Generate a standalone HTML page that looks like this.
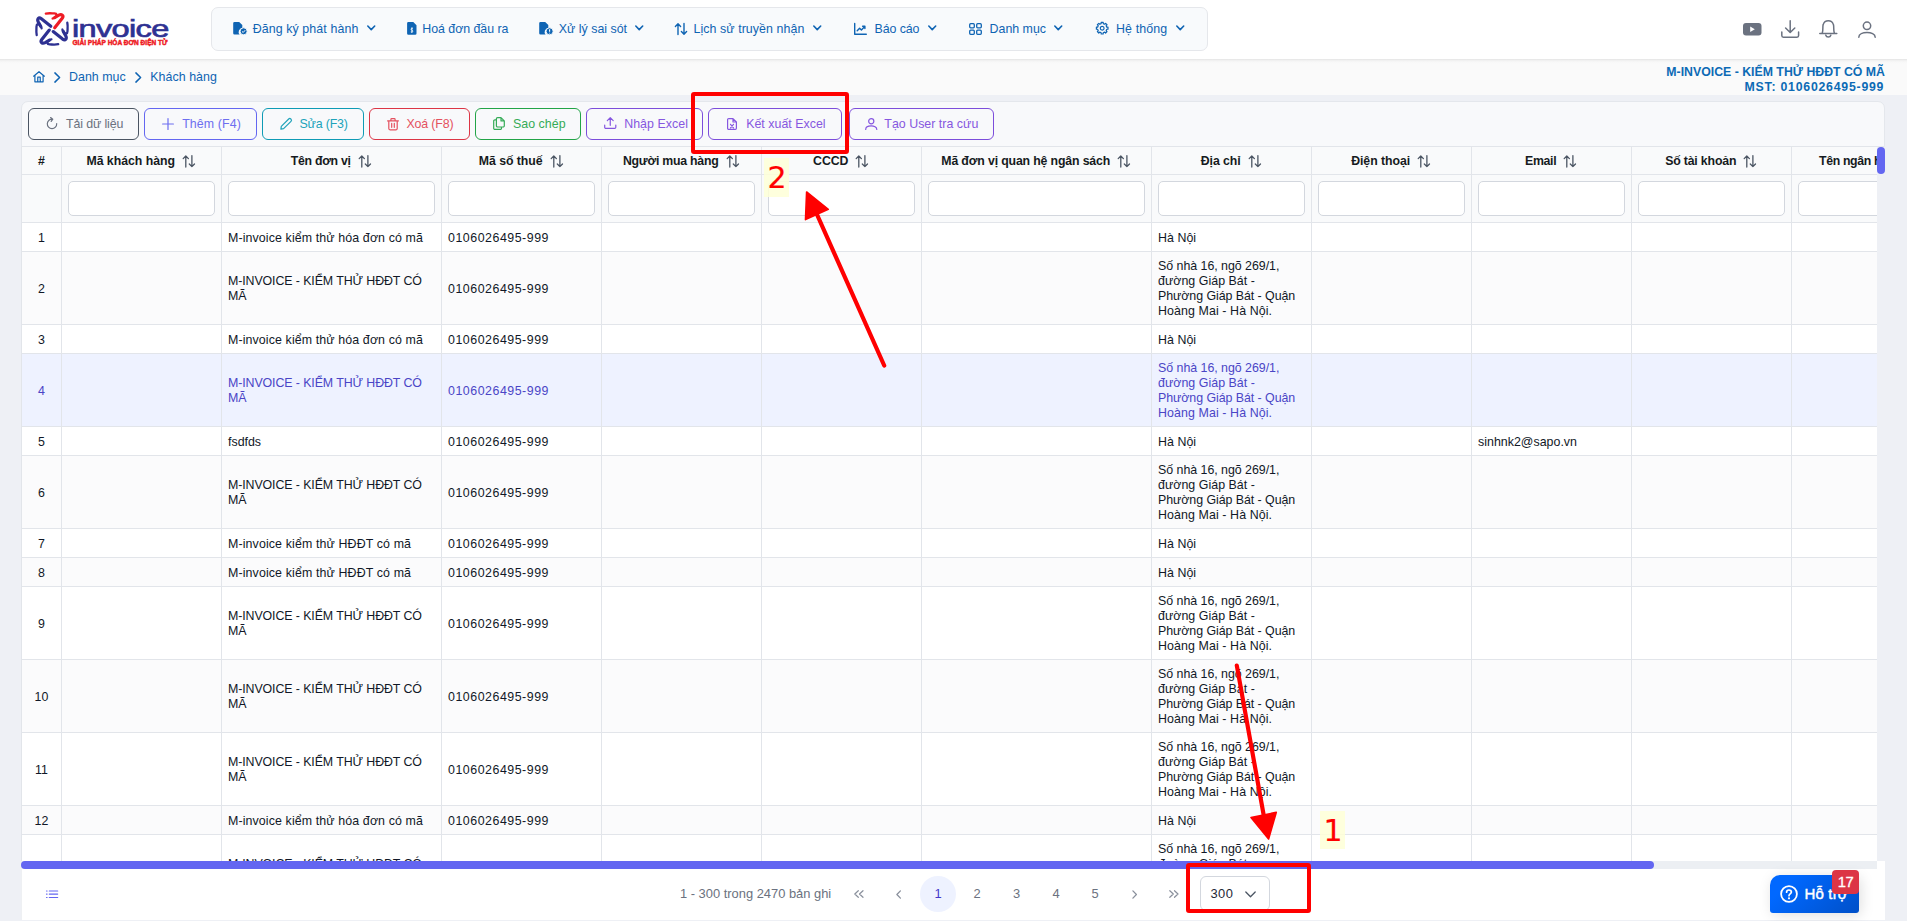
<!DOCTYPE html>
<html lang="vi">
<head>
<meta charset="utf-8">
<title>M-Invoice - Khách hàng</title>
<style>
*{box-sizing:border-box;margin:0;padding:0}
html,body{width:1907px;height:921px;overflow:hidden}
body{position:relative;background:#eef0f5;font-family:"Liberation Sans",sans-serif;font-size:12.4px;color:#111827}
.abs{position:absolute}
svg{position:absolute;overflow:visible}
#hdr{left:0;top:0;width:1907px;height:59px;background:#fff}
#nav{left:211px;top:7px;width:997px;height:44px;background:#f8fafc;border:1px solid #e5e7eb;border-radius:7px}
.nt{position:absolute;top:21px;line-height:16px;color:#0f64b3;white-space:nowrap}
#bc{left:0;top:59px;width:1907px;height:36px;background:linear-gradient(#e4e4e4 0,#f1f1f1 1.5px,#f8f8f8 3px,#fafafa 5px),#fafafa;background-repeat:no-repeat;background-size:100% 5px,100% 100%}
.bct{position:absolute;top:69px;line-height:16px;color:#0f64b3;white-space:nowrap}
.comp{position:absolute;right:22px;color:#0c6ab5;font-weight:bold;font-size:12.3px;line-height:15px;white-space:nowrap}
#tb{left:21px;top:101px;width:1864px;height:46px;background:#f8f9fb;border:1px solid #e4e7ec;border-radius:7px 7px 0 0}
.btn{position:absolute;top:108px;height:32px;border:1px solid;border-radius:6px;white-space:nowrap}
.btn span{position:absolute;top:7px;line-height:16px}
#grid{left:21px;top:146px;width:1856px;height:715px;overflow:hidden;background:#fff;border-left:1px solid #e2e5ea;border-top:1px solid #e2e5ea}
.row{position:absolute;left:0;width:1900px;border-bottom:1px solid #e2e5ea}
.c{position:absolute;top:0;bottom:0;border-right:1px solid #e2e5ea;padding:2px 6px 0 6px;display:flex;align-items:center;line-height:15px}
.c.n{justify-content:center;padding:2px 0 0 0}
.h{background:#f9fafb;font-weight:bold;color:#161a21}
.h .c{justify-content:center;padding:2px 2px 0 0;white-space:nowrap;font-size:12.3px}
.h .c svg{position:static;margin-left:8px;flex:none}
.f{background:#f9fafb}

.f i{position:absolute;left:6px;right:6px;top:6px;height:35px;background:#fff;border:1px solid #d3d7de;border-radius:5px}
.ev{background:#fbfbfc}
.sel{background:#eef2ff;color:#4a45c6}
#hs{left:21px;top:861px;width:1856px;height:8px;background:#eceff3}
#hs b{position:absolute;left:1856px;top:0;width:8px;height:8px;background:#fff}
#hs i{position:absolute;left:0;top:0;width:1633px;height:8px;border-radius:4px;background:#6366f1}
#vs{left:1877px;top:147px;width:8px;height:27px;border-radius:4px;background:#6366f1}
#ft{left:21px;top:869px;width:1864px;height:50.5px;background:#fff;border-left:1px solid #eef0f3}
.pg{position:absolute;top:885px;line-height:18px;color:#6b7280;white-space:nowrap;font-size:12.9px}
.pn{position:absolute;top:876px;width:36px;height:36px;border-radius:18px;text-align:center;line-height:36px;color:#6b7280;font-size:12.9px}
.pn.on{background:#eef2ff;color:#4338ca}
#dd{left:1200px;top:876px;width:70px;height:35px;border:1px solid #d3d7de;border-radius:6px;background:#fff}
#dd span{position:absolute;left:9.5px;top:8px;line-height:18px;color:#1f2937;font-size:12.9px;letter-spacing:.4px}
.lab{position:absolute;background:rgba(254,255,215,.85);color:#f00;-webkit-text-stroke:0.2px #f00;padding:1px 0 0 1px;font-family:"DejaVu Sans",sans-serif;font-size:30px;line-height:38px;text-align:center}
.rr{position:absolute;border:4px solid #f00;border-radius:3px}
#sup{left:1770px;top:875px;width:89px;height:38px;border-radius:10px 4px 3px 3px;background:linear-gradient(135deg,#0068ff 20%,#0050c8);color:#fff;font-size:15px;-webkit-text-stroke:0.45px #fff;box-shadow:2px 2px 14px rgba(0,0,0,.13)}
#sup span{position:absolute;left:34.5px;top:8.500px;line-height:20px;white-space:nowrap}
#bdg{left:1832px;top:870px;width:27px;height:24px;border-radius:4px;background:#dc3545;color:#fff;font-size:14.8px;line-height:24.5px;text-align:center;letter-spacing:-.4px;-webkit-text-stroke:0.3px #fff}
</style>
</head>
<body>
<div id="hdr" class="abs"></div>
<div id="nav" class="abs"></div>
<div id="bc" class="abs"></div>
<svg id="logo" style="left:33px;top:10px" width="140" height="40" viewBox="0 0 140 40"><g transform="translate(19 18.9) rotate(0)" fill="none" stroke="#ee1c25" stroke-linecap="round" stroke-linejoin="round"><path d="M2.7 -1.2 L10.2 -10.6 C12.2 -13.4 9.600 -15.200 6.800 -13.700 L2.600 -11.300" stroke-width="3.2"/><path d="M2.600 -11.300 C1.500 -10.500 0.900 -10.300 0.600 -10.400 M3.600 -12 C5.200 -13.200 5.200 -15.500 2.400 -15.500 C0 -15.500 -3 -16 -6.200 -15.300" stroke-width="2.3"/></g><g transform="translate(19 18.9) rotate(-90)" fill="none" stroke="#2e3192" stroke-linecap="round" stroke-linejoin="round"><path d="M2.7 -1.2 L10.2 -10.6 C12.2 -13.4 9.600 -15.200 6.800 -13.700 L2.600 -11.300" stroke-width="3.2"/><path d="M2.600 -11.300 C1.500 -10.500 0.900 -10.300 0.600 -10.400 M3.600 -12 C5.200 -13.200 5.200 -15.500 2.400 -15.500 C0 -15.500 -3 -16 -6.200 -15.300" stroke-width="2.3"/></g><g transform="translate(19 18.9) rotate(-180)" fill="none" stroke="#2e3192" stroke-linecap="round" stroke-linejoin="round"><path d="M2.7 -1.2 L10.2 -10.6 C12.2 -13.4 9.600 -15.200 6.800 -13.700 L2.600 -11.300" stroke-width="3.2"/><path d="M2.600 -11.300 C1.500 -10.500 0.900 -10.300 0.600 -10.400 M3.600 -12 C5.200 -13.200 5.200 -15.500 2.400 -15.500 C0 -15.500 -3 -16 -6.200 -15.300" stroke-width="2.3"/></g><g transform="translate(19 18.9) rotate(-270)" fill="none" stroke="#2e3192" stroke-linecap="round" stroke-linejoin="round"><path d="M2.7 -1.2 L10.2 -10.6 C12.2 -13.4 9.600 -15.200 6.800 -13.700 L2.600 -11.300" stroke-width="3.2"/><path d="M2.600 -11.300 C1.500 -10.500 0.900 -10.300 0.600 -10.400 M3.600 -12 C5.200 -13.200 5.200 -15.500 2.400 -15.500 C0 -15.500 -3 -16 -6.200 -15.300" stroke-width="2.3"/></g><text transform="translate(38.9 27.1) scale(1.335 1)" font-family="Liberation Sans, sans-serif" font-size="24.4" letter-spacing="-0.5" fill="#2e3192" stroke="#2e3192" stroke-width="0.7">invoice</text><text x="39.5" y="35.3" font-family="Liberation Sans, sans-serif" font-weight="bold" font-size="7.6" fill="#ee1c25" stroke="#ee1c25" stroke-width="0.5" textLength="95" lengthAdjust="spacingAndGlyphs">GIẢI PHÁP HÓA ĐƠN ĐIỆN TỬ</text></svg>
<svg style="left:233px;top:22px" width="15" height="13" viewBox="0 0 15 13"><path d="M1.5 0 H6.2 L9.3 3.1 V6 A4 4 0 0 0 6.6 12.6 H1.5 A1.3 1.3 0 0 1 0.2 11.3 V1.3 A1.3 1.3 0 0 1 1.5 0 Z" fill="#0f64b3"/><circle cx="10.6" cy="9.3" r="3.5" fill="#0f64b3" stroke="#f8fafc" stroke-width="0.9"/><path d="M9 9.4 L10.2 10.5 L12.2 8.2" fill="none" stroke="#f8fafc" stroke-width="1"/></svg><span class="nt" style="left:252.7px;letter-spacing:0.098px">Đăng ký phát hành</span><svg style="left:366.8px;top:25px" width="8.5" height="6.6" viewBox="0 0 8.5 6.6"><path d="M0.8 1 L4.25 4.6 L7.7 1" fill="none" stroke="#0f64b3" stroke-width="1.6" stroke-linecap="round" stroke-linejoin="round"/></svg>
<svg style="left:406.7px;top:22px" width="15" height="13" viewBox="0 0 15 13"><path d="M1.4 0 H6.3 L9.5 3.2 V11.4 A1.3 1.3 0 0 1 8.2 12.7 H1.4 A1.3 1.3 0 0 1 0.1 11.4 V1.3 A1.3 1.3 0 0 1 1.4 0 Z" fill="#0f64b3"/><path d="M5.9 6.3 C3.6 5.8 3.6 8 4.9 8.2 C6.3 8.5 6.2 10.5 3.8 9.9 M4.9 5.4 V10.9" fill="none" stroke="#f8fafc" stroke-width="0.9"/></svg><span class="nt" style="left:422.3px;letter-spacing:-0.04px">Hoá đơn đầu ra</span>
<svg style="left:539.2px;top:22px" width="15" height="13" viewBox="0 0 15 13"><path d="M1.5 0 H6.2 L9.3 3.1 V6 A4 4 0 0 0 6.6 12.6 H1.5 A1.3 1.3 0 0 1 0.2 11.3 V1.3 A1.3 1.3 0 0 1 1.5 0 Z" fill="#0f64b3"/><circle cx="10.6" cy="9.3" r="3.5" fill="#0f64b3" stroke="#f8fafc" stroke-width="0.9"/><path d="M10.6 7.3 V9.7 M10.6 10.7 V11.4" fill="none" stroke="#f8fafc" stroke-width="1.1"/></svg><span class="nt" style="left:558.8px;letter-spacing:-0.0px">Xử lý sai sót</span><svg style="left:635px;top:25px" width="8.5" height="6.6" viewBox="0 0 8.5 6.6"><path d="M0.8 1 L4.25 4.6 L7.7 1" fill="none" stroke="#0f64b3" stroke-width="1.6" stroke-linecap="round" stroke-linejoin="round"/></svg>
<svg style="left:675px;top:22.5px" width="12" height="12" viewBox="0 0 12 12"><path d="M3 11.5 V0.9 M0.4 3.4 L3 0.8 L5.6 3.4 M9 0.5 V11.1 M6.4 8.6 L9 11.2 L11.6 8.6" fill="none" stroke="#0f64b3" stroke-width="1.4" stroke-linecap="round" stroke-linejoin="round"/></svg><span class="nt" style="left:693.5px;letter-spacing:0.07px">Lịch sử truyền nhận</span><svg style="left:812.6px;top:25px" width="8.5" height="6.6" viewBox="0 0 8.5 6.6"><path d="M0.8 1 L4.25 4.6 L7.7 1" fill="none" stroke="#0f64b3" stroke-width="1.6" stroke-linecap="round" stroke-linejoin="round"/></svg>
<svg style="left:854px;top:22.5px" width="13" height="12" viewBox="0 0 13 12"><path d="M0.7 0.5 V11.3 H12.3 M3.2 7.8 L5.6 5.2 L7.4 6.9 L10.8 3.4 M8.6 3.3 H10.9 V5.6" fill="none" stroke="#0f64b3" stroke-width="1.4" stroke-linecap="round" stroke-linejoin="round"/></svg><span class="nt" style="left:874.5px;letter-spacing:-0.081px">Báo cáo</span><svg style="left:928px;top:25px" width="8.5" height="6.6" viewBox="0 0 8.5 6.6"><path d="M0.8 1 L4.25 4.6 L7.7 1" fill="none" stroke="#0f64b3" stroke-width="1.6" stroke-linecap="round" stroke-linejoin="round"/></svg>
<svg style="left:969.2px;top:22.5px" width="13" height="12" viewBox="0 0 13 12"><g fill="none" stroke="#0f64b3" stroke-width="1.3"><rect x="0.7" y="0.7" width="4.6" height="4.1" rx="1"/><rect x="7.7" y="0.7" width="4.6" height="4.1" rx="1"/><rect x="0.7" y="7.2" width="4.6" height="4.1" rx="1"/><rect x="7.7" y="7.2" width="4.6" height="4.1" rx="1"/></g></svg><span class="nt" style="left:989.6px;letter-spacing:-0.011px">Danh mục</span><svg style="left:1054.3px;top:25px" width="8.5" height="6.6" viewBox="0 0 8.5 6.6"><path d="M0.8 1 L4.25 4.6 L7.7 1" fill="none" stroke="#0f64b3" stroke-width="1.6" stroke-linecap="round" stroke-linejoin="round"/></svg>
<svg style="left:1096px;top:22.3px" width="12.4" height="12.4" viewBox="0 0 12.4 12.4"><path d="M5.20 0.39 L7.20 0.39 L7.23 1.61 L8.72 2.23 L9.61 1.38 L11.02 2.79 L10.17 3.68 L10.79 5.17 L12.01 5.20 L12.01 7.20 L10.79 7.23 L10.17 8.72 L11.02 9.61 L9.61 11.02 L8.72 10.17 L7.23 10.79 L7.20 12.01 L5.20 12.01 L5.17 10.79 L3.68 10.17 L2.79 11.02 L1.38 9.61 L2.23 8.72 L1.61 7.23 L0.39 7.20 L0.39 5.20 L1.61 5.17 L2.23 3.68 L1.38 2.79 L2.79 1.38 L3.68 2.23 L5.17 1.61 Z" fill="none" stroke="#0f64b3" stroke-width="1.2" stroke-linejoin="round"/><circle cx="6.2" cy="6.2" r="1.9" fill="none" stroke="#0f64b3" stroke-width="1.2"/></svg><span class="nt" style="left:1116px;letter-spacing:0.125px">Hệ thống</span><svg style="left:1176px;top:25px" width="8.5" height="6.6" viewBox="0 0 8.5 6.6"><path d="M0.8 1 L4.25 4.6 L7.7 1" fill="none" stroke="#0f64b3" stroke-width="1.6" stroke-linecap="round" stroke-linejoin="round"/></svg>
<svg style="left:1742.5px;top:23px" width="18.5" height="12.5" viewBox="0 0 18.5 12.5"><rect x="0" y="0" width="18.5" height="12.5" rx="3" fill="#6b7280"/><path d="M7.2 3.6 L11.8 6.25 L7.2 8.9 Z" fill="#fff"/></svg><svg style="left:1781px;top:20px" width="18.4" height="18" viewBox="0 0 18.4 18"><path d="M9.2 0.7 V12.3 M4.6 8 L9.2 12.5 L13.8 8 M0.8 12 V15.6 A1.6 1.6 0 0 0 2.4 17.2 H16 A1.6 1.6 0 0 0 17.6 15.6 V12" fill="none" stroke="#6b7280" stroke-width="1.5" stroke-linecap="round" stroke-linejoin="round"/></svg><svg style="left:1819px;top:20px" width="18.6" height="18" viewBox="0 0 18.6 18"><path d="M0.8 13.6 H17.8 M3.2 13.4 C4.4 10.5 3.4 7 4.2 4.6 C5 2 7 0.8 9.3 0.8 C11.600 0.8 13.6 2 14.4 4.6 C15.2 7 14.2 10.5 15.4 13.4 M6.8 15.2 C7.4 17.6 11.2 17.6 11.8 15.2" fill="none" stroke="#6b7280" stroke-width="1.5" stroke-linecap="round" stroke-linejoin="round"/></svg><svg style="left:1858px;top:20.5px" width="18" height="17" viewBox="0 0 18 17"><circle cx="9" cy="4.8" r="3.7" fill="none" stroke="#6b7280" stroke-width="1.5"/><path d="M0.8 16.2 C0.8 9.8 17.2 9.8 17.2 16.2" fill="none" stroke="#6b7280" stroke-width="1.5" stroke-linecap="round"/></svg>
<svg style="left:33px;top:71px" width="12" height="11.5" viewBox="0 0 12 11.5"><path d="M0.6 5.2 L6 0.7 L11.4 5.2 M1.9 4.4 V10.8 H10.1 V4.4 M4.75 10.8 V6.2 H7.25 V10.8" fill="none" stroke="#0f64b3" stroke-width="1.2" stroke-linecap="round" stroke-linejoin="round"/></svg><svg style="left:53.8px;top:71.5px" width="6.5" height="11" viewBox="0 0 6.5 11"><path d="M0.9 0.9 L5.6 5.5 L0.9 10.1" fill="none" stroke="#0f64b3" stroke-width="1.5" stroke-linecap="round" stroke-linejoin="round"/></svg><span class="bct" style="left:69px;letter-spacing:0.039px">Danh mục</span><svg style="left:135px;top:71.5px" width="6.5" height="11" viewBox="0 0 6.5 11"><path d="M0.9 0.9 L5.6 5.5 L0.9 10.1" fill="none" stroke="#0f64b3" stroke-width="1.5" stroke-linecap="round" stroke-linejoin="round"/></svg><span class="bct" style="left:150.3px;letter-spacing:0.046px">Khách hàng</span>
<div class="comp" style="top:65px;letter-spacing:0.004px;right:22.004px">M-INVOICE - KIỂM THỬ HĐĐT CÓ MÃ</div><div class="comp" style="top:80px;letter-spacing:0.768px;right:22.768px">MST: 0106026495-999</div>
<div id="tb" class="abs"></div>
<div class="btn" style="left:28px;width:111px;border-color:#4b5563;color:#6b7280"><svg style="left:17px;top:8.3px" width="12" height="12" viewBox="0 0 12 12"><path d="M6.6 2.2 A4.7 4.7 0 1 0 10.7 6.6 M4.6 0.6 L6.8 2.2 L5.2 4.4" fill="none" stroke="#6b7280" stroke-width="1.2" stroke-linecap="round" stroke-linejoin="round"/></svg><span style="left:37px;letter-spacing:-0.125px">Tải dữ liệu</span></div>
<div class="btn" style="left:144px;width:113px;border-color:#6366f1;color:#6d6ef0"><svg style="left:17px;top:8.8px" width="12" height="12" viewBox="0 0 12 12"><path d="M6 0.6 V11.4 M0.6 6 H11.4" fill="none" stroke="#6d6ef0" stroke-width="1.2" stroke-linecap="round" stroke-linejoin="round"/></svg><span style="left:37.2px;letter-spacing:0.108px">Thêm (F4)</span></div>
<div class="btn" style="left:262px;width:102px;border-color:#0e9bb5;color:#20a3ba"><svg style="left:16.5px;top:8.8px" width="12" height="12" viewBox="0 0 12 12"><path d="M0.9 11.1 L1.3 8.400 L8.700 1 A1.5 1.5 0 0 1 10.800 1 L11 1.200 A1.5 1.500 0 0 1 11 3.300 L3.600 10.700 Z" fill="none" stroke="#20a3ba" stroke-width="1.2" stroke-linecap="round" stroke-linejoin="round"/></svg><span style="left:36.5px;letter-spacing:-0.164px">Sửa (F3)</span></div>
<div class="btn" style="left:369px;width:101px;border-color:#dc3545;color:#e4515f"><svg style="left:16.5px;top:8.8px" width="12" height="12.5" viewBox="0 0 12 12.5"><path d="M0.6 2.9 H11.4 M3.9 2.7 V1.4 A0.8 0.8 0 0 1 4.7 0.6 H7.3 A0.8 0.8 0 0 1 8.1 1.4 V2.7 M1.8 3 V10.6 A1.2 1.2 0 0 0 3 11.8 H9 A1.2 1.2 0 0 0 10.2 10.600 V3 M4.7 5.400 V9.3 M7.3 5.400 V9.3" fill="none" stroke="#e4515f" stroke-width="1.2" stroke-linecap="round" stroke-linejoin="round"/></svg><span style="left:36.4px;letter-spacing:-0.138px">Xoá (F8)</span></div>
<div class="btn" style="left:475px;width:106px;border-color:#22a447;color:#35ab57"><svg style="left:17px;top:8.3px" width="12" height="13" viewBox="0 0 12 13"><path d="M4.600 0.600 H8 L11.300 3.900 V8.800 A1.200 1.200 0 0 1 10.100 10 H4.600 A1.200 1.200 0 0 1 3.400 8.800 V1.800 A1.200 1.200 0 0 1 4.600 0.600 Z M8 0.700 V3.900 H11.200 M3.300 2.800 H1.900 A1.200 1.200 0 0 0 0.700 4 V11.200 A1.200 1.200 0 0 0 1.900 12.400 H7.300 A1.200 1.200 0 0 0 8.500 11.200 V10.100" fill="none" stroke="#35ab57" stroke-width="1.2" stroke-linecap="round" stroke-linejoin="round"/></svg><span style="left:37px;letter-spacing:0.03px">Sao chép</span></div>
<div class="btn" style="left:586px;width:117px;border-color:#7c4ddb;color:#8657e0"><svg style="left:16.5px;top:8.3px" width="12.5" height="12" viewBox="0 0 12.5 12"><path d="M6.25 8.300 V0.700 M3.300 3.600 L6.250 0.650 L9.200 3.600 M0.700 8 V10.300 A1.100 1.100 0 0 0 1.800 11.400 H10.700 A1.100 1.100 0 0 0 11.800 10.300 V8" fill="none" stroke="#8657e0" stroke-width="1.2" stroke-linecap="round" stroke-linejoin="round"/></svg><span style="left:37.2px;letter-spacing:0.042px">Nhập Excel</span></div>
<div class="btn" style="left:708px;width:134px;border-color:#7c4ddb;color:#8657e0"><svg style="left:18px;top:8.8px" width="10" height="12" viewBox="0 0 10 12"><path d="M1.700 0.600 H6 L9.400 4 V10.300 A1.100 1.100 0 0 1 8.300 11.400 H1.700 A1.100 1.100 0 0 1 0.600 10.300 V1.700 A1.100 1.100 0 0 1 1.700 0.600 Z M6 0.700 V4 H9.300 M3.500 6.300 L6.500 9.800 M6.500 6.300 L3.500 9.800" fill="none" stroke="#8657e0" stroke-width="1.2" stroke-linecap="round" stroke-linejoin="round"/></svg><span style="left:37.2px;letter-spacing:0.014px">Kết xuất Excel</span></div>
<div class="btn" style="left:848.5px;width:145px;border-color:#7c4ddb;color:#8657e0"><svg style="left:15px;top:8.8px" width="12.5" height="12" viewBox="0 0 12.5 12"><circle cx="6.25" cy="3.300" r="2.600" fill="none" stroke="#8657e0" stroke-width="1.2" stroke-linecap="round" stroke-linejoin="round"/><path d="M0.700 11.400 C0.700 6.800 11.800 6.800 11.800 11.400" fill="none" stroke="#8657e0" stroke-width="1.2" stroke-linecap="round" stroke-linejoin="round"/></svg><span style="left:34.8px;letter-spacing:0.02px">Tạo User tra cứu</span></div>
<div id="grid" class="abs">
<div class="row h" style="top:0;height:28px"><div class="c" style="left:0;width:40px;padding-right:0">#</div><div class="c" style="left:40px;width:160px"><span style="letter-spacing:-0.019px">Mã khách hàng</span><svg width="11.6" height="12.5" viewBox="0.2 0 11.6 12.5"><path d="M3 12 V1 M0.400 3.600 L3 1 L5.600 3.600 M9.100 0.600 V11.600 M6.500 9 L9.100 11.600 L11.700 9" fill="none" stroke="#4b5563" stroke-width="1.300" stroke-linecap="round" stroke-linejoin="round"/></svg></div><div class="c" style="left:200px;width:220px"><span style="letter-spacing:-0.272px">Tên đơn vị</span><svg width="11.6" height="12.5" viewBox="0.2 0 11.6 12.5"><path d="M3 12 V1 M0.400 3.600 L3 1 L5.600 3.600 M9.100 0.600 V11.600 M6.500 9 L9.100 11.600 L11.700 9" fill="none" stroke="#4b5563" stroke-width="1.300" stroke-linecap="round" stroke-linejoin="round"/></svg></div><div class="c" style="left:420px;width:160px"><span style="letter-spacing:-0.053px">Mã số thuế</span><svg width="11.6" height="12.5" viewBox="0.2 0 11.6 12.5"><path d="M3 12 V1 M0.400 3.600 L3 1 L5.600 3.600 M9.100 0.600 V11.600 M6.500 9 L9.100 11.600 L11.700 9" fill="none" stroke="#4b5563" stroke-width="1.300" stroke-linecap="round" stroke-linejoin="round"/></svg></div><div class="c" style="left:580px;width:160px"><span style="letter-spacing:-0.24px">Người mua hàng</span><svg width="11.6" height="12.5" viewBox="0.2 0 11.6 12.5"><path d="M3 12 V1 M0.400 3.600 L3 1 L5.600 3.600 M9.100 0.600 V11.600 M6.500 9 L9.100 11.600 L11.700 9" fill="none" stroke="#4b5563" stroke-width="1.300" stroke-linecap="round" stroke-linejoin="round"/></svg></div><div class="c" style="left:740px;width:160px"><span style="letter-spacing:-0.083px">CCCD</span><svg width="11.6" height="12.5" viewBox="0.2 0 11.6 12.5"><path d="M3 12 V1 M0.400 3.600 L3 1 L5.600 3.600 M9.100 0.600 V11.600 M6.500 9 L9.100 11.600 L11.700 9" fill="none" stroke="#4b5563" stroke-width="1.300" stroke-linecap="round" stroke-linejoin="round"/></svg></div><div class="c" style="left:900px;width:230px"><span style="letter-spacing:-0.146px">Mã đơn vị quan hệ ngân sách</span><svg width="11.6" height="12.5" viewBox="0.2 0 11.6 12.5"><path d="M3 12 V1 M0.400 3.600 L3 1 L5.600 3.600 M9.100 0.600 V11.600 M6.500 9 L9.100 11.600 L11.700 9" fill="none" stroke="#4b5563" stroke-width="1.300" stroke-linecap="round" stroke-linejoin="round"/></svg></div><div class="c" style="left:1130px;width:160px"><span style="letter-spacing:-0.075px">Địa chỉ</span><svg width="11.6" height="12.5" viewBox="0.2 0 11.6 12.5"><path d="M3 12 V1 M0.400 3.600 L3 1 L5.600 3.600 M9.100 0.600 V11.600 M6.500 9 L9.100 11.600 L11.700 9" fill="none" stroke="#4b5563" stroke-width="1.300" stroke-linecap="round" stroke-linejoin="round"/></svg></div><div class="c" style="left:1290px;width:160px"><span style="letter-spacing:-0.034px">Điện thoại</span><svg width="11.6" height="12.5" viewBox="0.2 0 11.6 12.5"><path d="M3 12 V1 M0.400 3.600 L3 1 L5.600 3.600 M9.100 0.600 V11.600 M6.500 9 L9.100 11.600 L11.700 9" fill="none" stroke="#4b5563" stroke-width="1.300" stroke-linecap="round" stroke-linejoin="round"/></svg></div><div class="c" style="left:1450px;width:160px"><span style="letter-spacing:-0.323px">Email</span><svg width="11.6" height="12.5" viewBox="0.2 0 11.6 12.5"><path d="M3 12 V1 M0.400 3.600 L3 1 L5.600 3.600 M9.100 0.600 V11.600 M6.500 9 L9.100 11.600 L11.700 9" fill="none" stroke="#4b5563" stroke-width="1.300" stroke-linecap="round" stroke-linejoin="round"/></svg></div><div class="c" style="left:1610px;width:160px"><span style="letter-spacing:-0.167px">Số tài khoản</span><svg width="11.6" height="12.5" viewBox="0.2 0 11.6 12.5"><path d="M3 12 V1 M0.400 3.600 L3 1 L5.600 3.600 M9.100 0.600 V11.600 M6.500 9 L9.100 11.600 L11.700 9" fill="none" stroke="#4b5563" stroke-width="1.300" stroke-linecap="round" stroke-linejoin="round"/></svg></div><div class="c" style="left:1770px;width:160px;justify-content:flex-start;padding-left:27px"><span style="letter-spacing:-0.343px">Tên ngân hàng</span></div></div>
<div class="row f" style="top:28px;height:48px"><div class="c" style="left:0px;width:40px"></div><div class="c" style="left:40px;width:160px"><i></i></div><div class="c" style="left:200px;width:220px"><i></i></div><div class="c" style="left:420px;width:160px"><i></i></div><div class="c" style="left:580px;width:160px"><i></i></div><div class="c" style="left:740px;width:160px"><i></i></div><div class="c" style="left:900px;width:230px"><i></i></div><div class="c" style="left:1130px;width:160px"><i></i></div><div class="c" style="left:1290px;width:160px"><i></i></div><div class="c" style="left:1450px;width:160px"><i></i></div><div class="c" style="left:1610px;width:160px"><i></i></div><div class="c" style="left:1770px;width:160px"><i></i></div></div>
<div class="row" style="top:76px;height:29px"><div class="c n" style="left:0px;width:40px">1</div><div class="c" style="left:40px;width:160px"></div><div class="c" style="left:200px;width:220px"><span><span style="letter-spacing:0.114px">M-invoice kiểm thử hóa đơn có mã</span></span></div><div class="c" style="left:420px;width:160px"><span style="letter-spacing:0.52px">0106026495-999</span></div><div class="c" style="left:580px;width:160px"></div><div class="c" style="left:740px;width:160px"></div><div class="c" style="left:900px;width:230px"></div><div class="c" style="left:1130px;width:160px"><span><span style="letter-spacing:0.038px">Hà Nội</span></span></div><div class="c" style="left:1290px;width:160px"></div><div class="c" style="left:1450px;width:160px"></div><div class="c" style="left:1610px;width:160px"></div><div class="c" style="left:1770px;width:160px"></div></div>
<div class="row ev" style="top:105px;height:73px"><div class="c n" style="left:0px;width:40px">2</div><div class="c" style="left:40px;width:160px"></div><div class="c" style="left:200px;width:220px"><span><span style="letter-spacing:-0.103px">M-INVOICE - KIỂM THỬ HĐĐT CÓ</span><br>MÃ</span></div><div class="c" style="left:420px;width:160px"><span style="letter-spacing:0.52px">0106026495-999</span></div><div class="c" style="left:580px;width:160px"></div><div class="c" style="left:740px;width:160px"></div><div class="c" style="left:900px;width:230px"></div><div class="c" style="left:1130px;width:160px"><span><span style="letter-spacing:-0.026px">Số nhà 16, ngõ 269/1,</span><br><span style="letter-spacing:0.036px">đường Giáp Bát -</span><br><span style="letter-spacing:-0.052px">Phường Giáp Bát - Quận</span><br><span style="letter-spacing:0.097px">Hoàng Mai - Hà Nội.</span></span></div><div class="c" style="left:1290px;width:160px"></div><div class="c" style="left:1450px;width:160px"></div><div class="c" style="left:1610px;width:160px"></div><div class="c" style="left:1770px;width:160px"></div></div>
<div class="row" style="top:178px;height:29px"><div class="c n" style="left:0px;width:40px">3</div><div class="c" style="left:40px;width:160px"></div><div class="c" style="left:200px;width:220px"><span><span style="letter-spacing:0.114px">M-invoice kiểm thử hóa đơn có mã</span></span></div><div class="c" style="left:420px;width:160px"><span style="letter-spacing:0.52px">0106026495-999</span></div><div class="c" style="left:580px;width:160px"></div><div class="c" style="left:740px;width:160px"></div><div class="c" style="left:900px;width:230px"></div><div class="c" style="left:1130px;width:160px"><span><span style="letter-spacing:0.038px">Hà Nội</span></span></div><div class="c" style="left:1290px;width:160px"></div><div class="c" style="left:1450px;width:160px"></div><div class="c" style="left:1610px;width:160px"></div><div class="c" style="left:1770px;width:160px"></div></div>
<div class="row sel" style="top:207px;height:73px"><div class="c n" style="left:0px;width:40px">4</div><div class="c" style="left:40px;width:160px"></div><div class="c" style="left:200px;width:220px"><span><span style="letter-spacing:-0.103px">M-INVOICE - KIỂM THỬ HĐĐT CÓ</span><br>MÃ</span></div><div class="c" style="left:420px;width:160px"><span style="letter-spacing:0.52px">0106026495-999</span></div><div class="c" style="left:580px;width:160px"></div><div class="c" style="left:740px;width:160px"></div><div class="c" style="left:900px;width:230px"></div><div class="c" style="left:1130px;width:160px"><span><span style="letter-spacing:-0.026px">Số nhà 16, ngõ 269/1,</span><br><span style="letter-spacing:0.036px">đường Giáp Bát -</span><br><span style="letter-spacing:-0.052px">Phường Giáp Bát - Quận</span><br><span style="letter-spacing:0.097px">Hoàng Mai - Hà Nội.</span></span></div><div class="c" style="left:1290px;width:160px"></div><div class="c" style="left:1450px;width:160px"></div><div class="c" style="left:1610px;width:160px"></div><div class="c" style="left:1770px;width:160px"></div></div>
<div class="row" style="top:280px;height:29px"><div class="c n" style="left:0px;width:40px">5</div><div class="c" style="left:40px;width:160px"></div><div class="c" style="left:200px;width:220px"><span>fsdfds</span></div><div class="c" style="left:420px;width:160px"><span style="letter-spacing:0.52px">0106026495-999</span></div><div class="c" style="left:580px;width:160px"></div><div class="c" style="left:740px;width:160px"></div><div class="c" style="left:900px;width:230px"></div><div class="c" style="left:1130px;width:160px"><span><span style="letter-spacing:0.038px">Hà Nội</span></span></div><div class="c" style="left:1290px;width:160px"></div><div class="c" style="left:1450px;width:160px"><span style="letter-spacing:0.021px">sinhnk2@sapo.vn</span></div><div class="c" style="left:1610px;width:160px"></div><div class="c" style="left:1770px;width:160px"></div></div>
<div class="row ev" style="top:309px;height:73px"><div class="c n" style="left:0px;width:40px">6</div><div class="c" style="left:40px;width:160px"></div><div class="c" style="left:200px;width:220px"><span><span style="letter-spacing:-0.103px">M-INVOICE - KIỂM THỬ HĐĐT CÓ</span><br>MÃ</span></div><div class="c" style="left:420px;width:160px"><span style="letter-spacing:0.52px">0106026495-999</span></div><div class="c" style="left:580px;width:160px"></div><div class="c" style="left:740px;width:160px"></div><div class="c" style="left:900px;width:230px"></div><div class="c" style="left:1130px;width:160px"><span><span style="letter-spacing:-0.026px">Số nhà 16, ngõ 269/1,</span><br><span style="letter-spacing:0.036px">đường Giáp Bát -</span><br><span style="letter-spacing:-0.052px">Phường Giáp Bát - Quận</span><br><span style="letter-spacing:0.097px">Hoàng Mai - Hà Nội.</span></span></div><div class="c" style="left:1290px;width:160px"></div><div class="c" style="left:1450px;width:160px"></div><div class="c" style="left:1610px;width:160px"></div><div class="c" style="left:1770px;width:160px"></div></div>
<div class="row" style="top:382px;height:29px"><div class="c n" style="left:0px;width:40px">7</div><div class="c" style="left:40px;width:160px"></div><div class="c" style="left:200px;width:220px"><span><span style="letter-spacing:0.124px">M-invoice kiểm thử HĐĐT có mã</span></span></div><div class="c" style="left:420px;width:160px"><span style="letter-spacing:0.52px">0106026495-999</span></div><div class="c" style="left:580px;width:160px"></div><div class="c" style="left:740px;width:160px"></div><div class="c" style="left:900px;width:230px"></div><div class="c" style="left:1130px;width:160px"><span><span style="letter-spacing:0.038px">Hà Nội</span></span></div><div class="c" style="left:1290px;width:160px"></div><div class="c" style="left:1450px;width:160px"></div><div class="c" style="left:1610px;width:160px"></div><div class="c" style="left:1770px;width:160px"></div></div>
<div class="row ev" style="top:411px;height:29px"><div class="c n" style="left:0px;width:40px">8</div><div class="c" style="left:40px;width:160px"></div><div class="c" style="left:200px;width:220px"><span><span style="letter-spacing:0.124px">M-invoice kiểm thử HĐĐT có mã</span></span></div><div class="c" style="left:420px;width:160px"><span style="letter-spacing:0.52px">0106026495-999</span></div><div class="c" style="left:580px;width:160px"></div><div class="c" style="left:740px;width:160px"></div><div class="c" style="left:900px;width:230px"></div><div class="c" style="left:1130px;width:160px"><span><span style="letter-spacing:0.038px">Hà Nội</span></span></div><div class="c" style="left:1290px;width:160px"></div><div class="c" style="left:1450px;width:160px"></div><div class="c" style="left:1610px;width:160px"></div><div class="c" style="left:1770px;width:160px"></div></div>
<div class="row" style="top:440px;height:73px"><div class="c n" style="left:0px;width:40px">9</div><div class="c" style="left:40px;width:160px"></div><div class="c" style="left:200px;width:220px"><span><span style="letter-spacing:-0.103px">M-INVOICE - KIỂM THỬ HĐĐT CÓ</span><br>MÃ</span></div><div class="c" style="left:420px;width:160px"><span style="letter-spacing:0.52px">0106026495-999</span></div><div class="c" style="left:580px;width:160px"></div><div class="c" style="left:740px;width:160px"></div><div class="c" style="left:900px;width:230px"></div><div class="c" style="left:1130px;width:160px"><span><span style="letter-spacing:-0.026px">Số nhà 16, ngõ 269/1,</span><br><span style="letter-spacing:0.036px">đường Giáp Bát -</span><br><span style="letter-spacing:-0.052px">Phường Giáp Bát - Quận</span><br><span style="letter-spacing:0.097px">Hoàng Mai - Hà Nội.</span></span></div><div class="c" style="left:1290px;width:160px"></div><div class="c" style="left:1450px;width:160px"></div><div class="c" style="left:1610px;width:160px"></div><div class="c" style="left:1770px;width:160px"></div></div>
<div class="row ev" style="top:513px;height:73px"><div class="c n" style="left:0px;width:40px">10</div><div class="c" style="left:40px;width:160px"></div><div class="c" style="left:200px;width:220px"><span><span style="letter-spacing:-0.103px">M-INVOICE - KIỂM THỬ HĐĐT CÓ</span><br>MÃ</span></div><div class="c" style="left:420px;width:160px"><span style="letter-spacing:0.52px">0106026495-999</span></div><div class="c" style="left:580px;width:160px"></div><div class="c" style="left:740px;width:160px"></div><div class="c" style="left:900px;width:230px"></div><div class="c" style="left:1130px;width:160px"><span><span style="letter-spacing:-0.026px">Số nhà 16, ngõ 269/1,</span><br><span style="letter-spacing:0.036px">đường Giáp Bát -</span><br><span style="letter-spacing:-0.052px">Phường Giáp Bát - Quận</span><br><span style="letter-spacing:0.097px">Hoàng Mai - Hà Nội.</span></span></div><div class="c" style="left:1290px;width:160px"></div><div class="c" style="left:1450px;width:160px"></div><div class="c" style="left:1610px;width:160px"></div><div class="c" style="left:1770px;width:160px"></div></div>
<div class="row" style="top:586px;height:73px"><div class="c n" style="left:0px;width:40px">11</div><div class="c" style="left:40px;width:160px"></div><div class="c" style="left:200px;width:220px"><span><span style="letter-spacing:-0.103px">M-INVOICE - KIỂM THỬ HĐĐT CÓ</span><br>MÃ</span></div><div class="c" style="left:420px;width:160px"><span style="letter-spacing:0.52px">0106026495-999</span></div><div class="c" style="left:580px;width:160px"></div><div class="c" style="left:740px;width:160px"></div><div class="c" style="left:900px;width:230px"></div><div class="c" style="left:1130px;width:160px"><span><span style="letter-spacing:-0.026px">Số nhà 16, ngõ 269/1,</span><br><span style="letter-spacing:0.036px">đường Giáp Bát -</span><br><span style="letter-spacing:-0.052px">Phường Giáp Bát - Quận</span><br><span style="letter-spacing:0.097px">Hoàng Mai - Hà Nội.</span></span></div><div class="c" style="left:1290px;width:160px"></div><div class="c" style="left:1450px;width:160px"></div><div class="c" style="left:1610px;width:160px"></div><div class="c" style="left:1770px;width:160px"></div></div>
<div class="row ev" style="top:659px;height:29px"><div class="c n" style="left:0px;width:40px">12</div><div class="c" style="left:40px;width:160px"></div><div class="c" style="left:200px;width:220px"><span><span style="letter-spacing:0.114px">M-invoice kiểm thử hóa đơn có mã</span></span></div><div class="c" style="left:420px;width:160px"><span style="letter-spacing:0.52px">0106026495-999</span></div><div class="c" style="left:580px;width:160px"></div><div class="c" style="left:740px;width:160px"></div><div class="c" style="left:900px;width:230px"></div><div class="c" style="left:1130px;width:160px"><span><span style="letter-spacing:0.038px">Hà Nội</span></span></div><div class="c" style="left:1290px;width:160px"></div><div class="c" style="left:1450px;width:160px"></div><div class="c" style="left:1610px;width:160px"></div><div class="c" style="left:1770px;width:160px"></div></div>
<div class="row" style="top:688px;height:73px"><div class="c n" style="left:0px;width:40px">13</div><div class="c" style="left:40px;width:160px"></div><div class="c" style="left:200px;width:220px"><span><span style="letter-spacing:-0.103px">M-INVOICE - KIỂM THỬ HĐĐT CÓ</span><br>MÃ</span></div><div class="c" style="left:420px;width:160px"><span style="letter-spacing:0.52px">0106026495-999</span></div><div class="c" style="left:580px;width:160px"></div><div class="c" style="left:740px;width:160px"></div><div class="c" style="left:900px;width:230px"></div><div class="c" style="left:1130px;width:160px"><span><span style="letter-spacing:-0.026px">Số nhà 16, ngõ 269/1,</span><br><span style="letter-spacing:0.036px">đường Giáp Bát -</span><br><span style="letter-spacing:-0.052px">Phường Giáp Bát - Quận</span><br><span style="letter-spacing:0.097px">Hoàng Mai - Hà Nội.</span></span></div><div class="c" style="left:1290px;width:160px"></div><div class="c" style="left:1450px;width:160px"></div><div class="c" style="left:1610px;width:160px"></div><div class="c" style="left:1770px;width:160px"></div></div>
</div>
<div id="hs" class="abs"><i></i><b></b></div>
<div id="vs" class="abs"></div>
<div id="ft" class="abs"></div>
<svg style="left:46px;top:889.5px" width="12.2" height="8.4" viewBox="0 0 12.2 8.4"><path d="M0.500 1 H1.100 M3.300 1 H11.700 M0.500 4.100 H1.100 M3.300 4.100 H11.700 M0.500 7.500 H1.100 M3.300 7.500 H11.700" fill="none" stroke="#6366f1" stroke-width="1.150" stroke-linecap="round"/></svg><span class="pg" style="left:680px">1 - 300 trong 2470 bản ghi</span>
<svg style="left:854.4px;top:890px" width="10" height="8" viewBox="0 0 10 8"><path d="M4.300 0.700 L0.800 4 L4.300 7.300 M9 0.700 L5.500 4 L9 7.300" fill="none" stroke="#8a909c" stroke-width="1.200" stroke-linecap="round" stroke-linejoin="round"/></svg><svg style="left:896px;top:889.500px" width="5.500" height="9" viewBox="0 0 5.5 9"><path d="M4.400 0.900 L0.900 4.500 L4.400 8.100" fill="none" stroke="#8a909c" stroke-width="1.300" stroke-linecap="round" stroke-linejoin="round"/></svg><div class="pn on" style="left:920px">1</div><div class="pn" style="left:959px">2</div><div class="pn" style="left:998.5px">3</div><div class="pn" style="left:1038px">4</div><div class="pn" style="left:1077px">5</div><svg style="left:1132px;top:889.500px" width="5.500" height="9" viewBox="0 0 5.5 9"><path d="M0.900 0.900 L4.400 4.500 L0.900 8.100" fill="none" stroke="#8a909c" stroke-width="1.300" stroke-linecap="round" stroke-linejoin="round"/></svg><svg style="left:1169px;top:890px" width="10" height="8" viewBox="0 0 10 8"><path d="M0.800 0.700 L4.300 4 L0.800 7.300 M5.500 0.700 L9 4 L5.500 7.300" fill="none" stroke="#8a909c" stroke-width="1.200" stroke-linecap="round" stroke-linejoin="round"/></svg>
<div id="dd" class="abs"><span>300</span></div><svg style="left:1245px;top:890.5px" width="11" height="7.7" viewBox="0 0 11 7.7"><path d="M0.8 1 L5.5 5.7 L10.2 1" fill="none" stroke="#4b5563" stroke-width="1.3" stroke-linecap="round" stroke-linejoin="round"/></svg>
<div id="sup" class="abs"><span style="letter-spacing:0.159px">Hỗ trợ</span></div><svg style="left:1780px;top:885px" width="18" height="18" viewBox="0 0 18 18"><circle cx="9" cy="9" r="7.900" fill="none" stroke="#fff" stroke-width="1.800"/><path d="M6.600 7.200 C6.600 4.300 11.400 4.300 11.400 7.100 C11.400 8.900 9 8.900 9 10.700" fill="none" stroke="#fff" stroke-width="1.700" stroke-linecap="round"/><circle cx="9" cy="13.300" r="1.100" fill="#fff"/></svg><div id="bdg" class="abs">17</div>
<div class="lab" style="left:764px;top:158px;width:25px;height:39px">2</div><div class="lab" style="left:1320px;top:811px;width:25px;height:38px">1</div>
<div class="rr" style="left:691px;top:92px;width:158px;height:62px"></div><div class="rr" style="left:1186px;top:863px;width:125px;height:50px"></div>
<svg style="left:0;top:0" width="1907" height="921" viewBox="0 0 1907 921"><g fill="#f00" stroke="#f00" stroke-linejoin="round" stroke-linecap="round"><path d="M884.2 365.500 L817 214.500" stroke-width="4.200" fill="none"/><path d="M806.600 192 L828.300 209.300 L805.500 219.600 Z" stroke-width="1.600"/><path d="M1236.800 665.500 L1263.600 814.700" stroke-width="4.200" fill="none"/><path d="M1268.600 839 L1251 817.600 L1276.300 812.300 Z" stroke-width="1.600"/></g></svg>
</body>
</html>
